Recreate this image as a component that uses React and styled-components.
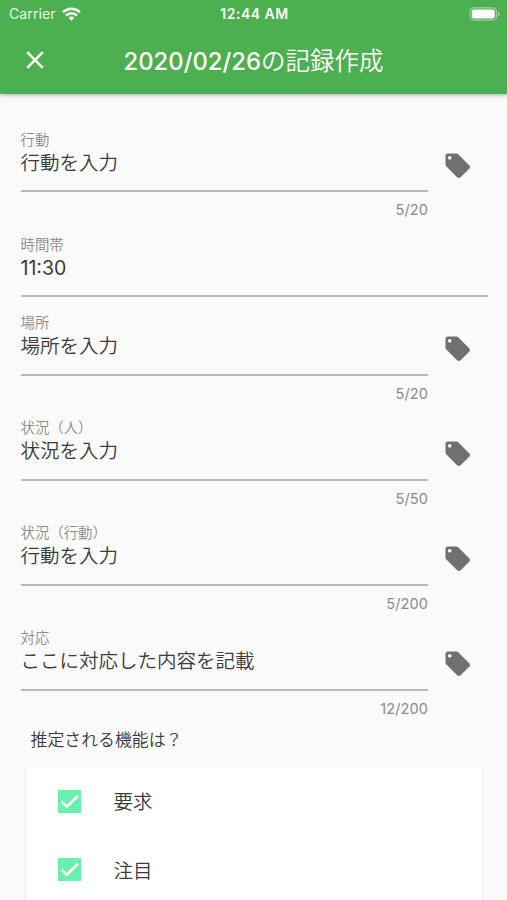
import React from "react";
import styled, { createGlobalStyle } from "styled-components";

const GlobalStyle = createGlobalStyle`
  * { box-sizing: border-box; }
  body {
    margin: 0;
    background: #fafafa;
    font-family: Inter, "Noto Sans CJK JP", sans-serif;
    color: #3b3b3b;
  }
`;

const Screen = styled.div`
  height: 900px;
  overflow: hidden;
  display: flex;
  flex-direction: column;
`;

const Header = styled.header`
  flex: none;
  height: 94px;
  background: #4caf50;
  color: #fff;
  box-shadow: 0 1px 4px rgba(0, 0, 0, 0.32);
`;

const StatusBar = styled.div`
  height: 27px;
  padding: 0 7px 0 9px;
  display: grid;
  grid-template-columns: 1fr auto 1fr;
  align-items: center;
  font-size: 14.2px;
  line-height: 27px;
`;

const Carrier = styled.div`
  display: flex;
  align-items: center;
  gap: 6px;
  color: rgba(255, 255, 255, 0.9);
`;

const Clock = styled.div`
  font-weight: 600;
  font-size: 14px;
  letter-spacing: 0.5px;
`;

const Battery = styled.svg`
  justify-self: end;
  display: block;
`;

const TitleBar = styled.div`
  height: 67px;
  display: grid;
  grid-template-columns: 70px 1fr 70px;
  align-items: center;
`;

const CloseButton = styled.button`
  border: 0;
  padding: 0 0 2px;
  background: none;
  color: inherit;
  display: flex;
  justify-content: center;
`;

const Title = styled.h1`
  margin: 0;
  padding-top: 2px;
  font-size: 24.5px;
  font-weight: 500;
  line-height: 36px;
  text-align: center;
  white-space: nowrap;
`;

const TitleDate = styled.span`
  font-size: 23.8px;
`;

const TitleSuffix = styled.span`
  font-weight: 350;
`;

const Form = styled.main`
  padding: 37.5px 19px 0 20.5px;
`;

const FieldRow = styled.div`
  height: ${(p) => (p.$short ? "78.5px" : "105px")};
  display: flex;
`;

const FieldBody = styled.div`
  flex: 1;
`;

const Label = styled.div`
  font-size: 14.4px;
  font-weight: 350;
  line-height: 16px;
  color: #8c8c8c;
`;

const Value = styled.div`
  height: 44.5px;
  padding-top: 3px;
  border-bottom: 2px solid #b9b9b9;
  font-size: 19.5px;
  font-weight: ${(p) => (p.$numeric ? 400 : 350)};
  line-height: 24px;
`;

const Counter = styled.div`
  padding-top: 9px;
  font-size: 14.5px;
  line-height: 17px;
  letter-spacing: 0.1px;
  text-align: right;
  color: #8b8b8b;
`;

const TagButton = styled.button`
  flex: none;
  width: 60px;
  height: 50px;
  border: 0;
  padding: 19px 0 0 15px;
  background: none;
  color: #707070;
  display: flex;
`;

const Question = styled.div`
  margin: -3px 0 0 10px;
  height: 35px;
  font-size: 16.9px;
  font-weight: 350;
  line-height: 17px;
`;

const Card = styled.section`
  margin: 0 6px 0 5.5px;
  height: 210px;
  border-radius: 4px;
  background: #fff;
  box-shadow: 0 1px 2px rgba(0, 0, 0, 0.22);
`;

const Option = styled.div`
  height: 68.6px;
  padding-left: 32px;
  display: flex;
  align-items: center;
  gap: 32.5px;
  font-size: 19.5px;
  font-weight: 350;
`;

const OptionName = styled.span`
  padding-bottom: 1px;
`;

const Checkbox = styled.span`
  width: 23px;
  height: 23px;
  background: #69f0ae;
  display: flex;
`;

const fields = [
  { label: "行動", value: "行動を入力", count: "5/20" },
  { label: "時間帯", value: "11:30", numeric: true },
  { label: "場所", value: "場所を入力", count: "5/20" },
  { label: "状況（人）", value: "状況を入力", count: "5/50" },
  { label: "状況（行動）", value: "行動を入力", count: "5/200" },
  { label: "対応", value: "ここに対応した内容を記載", count: "12/200" },
];

const WifiIcon = () => (
  <svg width="19" height="14" viewBox="0 0 19 14" fill="none" stroke="#fff" strokeWidth="2.5">
    <path d="M1 5.2a12.2 12.2 0 0 1 17 0" />
    <path d="M4 8.5a7.9 7.9 0 0 1 11 0" />
    <path d="M9.5 13.7 6.5 10.7a4.2 4.2 0 0 1 6 0Z" fill="#fff" stroke="none" />
  </svg>
);

const TagIcon = () => (
  <svg width="29.4" height="29.4" viewBox="0 0 24 24" fill="currentColor">
    <path d="M21.41 11.58l-9-9C12.05 2.22 11.55 2 11 2H4c-1.1 0-2 .9-2 2v7c0 .55.22 1.05.59 1.42l9 9c.36.36.86.58 1.41.58.55 0 1.05-.22 1.41-.59l7-7c.37-.36.59-.86.59-1.41 0-.55-.23-1.06-.59-1.42zM5.5 7C4.67 7 4 6.33 4 5.5S4.67 4 5.5 4 7 4.67 7 5.5 6.33 7 5.5 7z" />
  </svg>
);

const Field = ({ label, value, count, numeric }) => (
  <FieldRow $short={!count}>
    <FieldBody>
      <Label>{label}</Label>
      <Value $numeric={numeric}>{value}</Value>
      {count && <Counter>{count}</Counter>}
    </FieldBody>
    {count && (
      <TagButton aria-label="タグ">
        <TagIcon />
      </TagButton>
    )}
  </FieldRow>
);

export default function App() {
  return (
    <Screen>
      <GlobalStyle />
      <Header>
        <StatusBar>
          <Carrier>
            Carrier
            <WifiIcon />
          </Carrier>
          <Clock>12:44 AM</Clock>
          <Battery width="31" height="14" viewBox="0 0 31 14">
            <rect x="1" y="0.8" width="26.5" height="12.4" rx="3.8" fill="none" stroke="#fff" strokeOpacity="0.45" strokeWidth="1.2" />
            <rect x="2.8" y="2.5" width="23" height="9" rx="2.2" fill="#fff" />
            <path d="M29 4.8q1.7.8 1.7 2.2T29 9.2Z" fill="#fff" fillOpacity="0.5" />
          </Battery>
        </StatusBar>
        <TitleBar>
          <CloseButton aria-label="閉じる">
            <svg width="18" height="18" viewBox="0 0 18 18" stroke="#fff" strokeWidth="2.6">
              <path d="M1.2 1.2l15.6 15.6M16.8 1.2L1.2 16.8" />
            </svg>
          </CloseButton>
          <Title>
            <TitleDate>2020/02/26</TitleDate>
            <TitleSuffix>の記録作成</TitleSuffix>
          </Title>
        </TitleBar>
      </Header>
      <Form>
        {fields.map((field, i) => (
          <Field key={i} {...field} />
        ))}
        <Question>推定される機能は？</Question>
        <Card>
          {["要求", "注目"].map((name) => (
            <Option key={name}>
              <Checkbox>
                <svg width="23" height="23" viewBox="0 0 23 23" fill="none" stroke="#fff" strokeWidth="2.6">
                  <path d="M3.2 11.4l5.6 5.4L20 5.8" />
                </svg>
              </Checkbox>
              <OptionName>{name}</OptionName>
            </Option>
          ))}
        </Card>
      </Form>
    </Screen>
  );
}
